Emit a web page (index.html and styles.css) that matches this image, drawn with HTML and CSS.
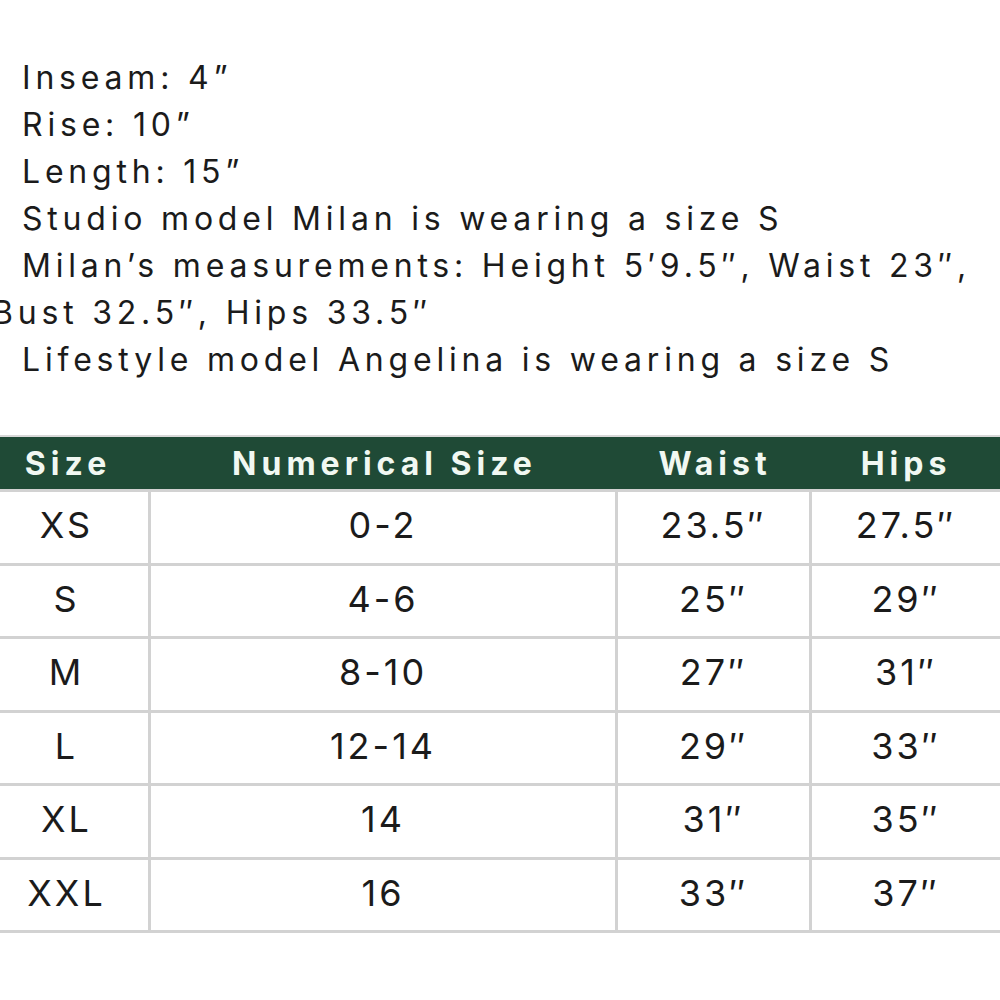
FILE: index.html
```html
<!DOCTYPE html>
<html>
<head>
<meta charset="utf-8">
<link rel="stylesheet" href="styles.css">
</head>
<body>
<div class="page">
  <div class="details">
    <div class="line">Inseam: 4”</div>
    <div class="line">Rise: 10”</div>
    <div class="line">Length: 15”</div>
    <div class="line">Studio model Milan is wearing a size S</div>
    <div class="line">Milan’s measurements: Height 5′9.5″, Waist 23″,</div>
    <div class="line wrap">Bust 32.5″, Hips 33.5″</div>
    <div class="line">Lifestyle model Angelina is wearing a size S</div>
  </div>

  <div class="chart">
    <div class="row head">
      <div class="cell">Size</div>
      <div class="cell">Numerical Size</div>
      <div class="cell">Waist</div>
      <div class="cell">Hips</div>
    </div>
    <div class="row">
      <div class="cell">XS</div>
      <div class="cell">0-2</div>
      <div class="cell">23.5″</div>
      <div class="cell">27.5″</div>
    </div>
    <div class="row">
      <div class="cell">S</div>
      <div class="cell">4-6</div>
      <div class="cell">25″</div>
      <div class="cell">29″</div>
    </div>
    <div class="row">
      <div class="cell">M</div>
      <div class="cell">8-10</div>
      <div class="cell">27″</div>
      <div class="cell">31″</div>
    </div>
    <div class="row">
      <div class="cell">L</div>
      <div class="cell">12-14</div>
      <div class="cell">29″</div>
      <div class="cell">33″</div>
    </div>
    <div class="row">
      <div class="cell">XL</div>
      <div class="cell">14</div>
      <div class="cell">31″</div>
      <div class="cell">35″</div>
    </div>
    <div class="row">
      <div class="cell">XXL</div>
      <div class="cell">16</div>
      <div class="cell">33″</div>
      <div class="cell">37″</div>
    </div>
  </div>
</div>
</body>
</html>
```

FILE: styles.css
```css
html, body {
  margin: 0;
  padding: 0;
  background: #ffffff;
}
body {
  width: 1000px;
  height: 1000px;
  overflow: hidden;
  font-family: "Inter", "Liberation Sans", sans-serif;
  color: #1b1b1b;
}
.page {
  margin-left: -15px;
  width: 1015px;
}
.details {
  padding-top: 54px;
  font-size: 32px;
  line-height: 47px;
  letter-spacing: 4.8px;
  white-space: nowrap;
}
.line {
  padding-left: 37px;
}
.line.wrap {
  padding-left: 7px;
}
.chart {
  margin-top: 52px;
  width: 1015px;
}
.row {
  display: grid;
  grid-template-columns: 166px 467px 194px 188px;
  height: 70.5px;
  border-bottom: 3px solid #d2d2d2;
}
.row .cell {
  display: flex;
  align-items: center;
  justify-content: center;
  font-size: 36px;
  letter-spacing: 3px;
  border-right: 3px solid #d2d2d2;
  padding-bottom: 4px;
}
.row .cell:last-child {
  border-right: none;
}
.row.head {
  background: #1f4a36;
  height: 52px;
  border-top: 2px solid #d8d8d8;
  border-bottom: 3px solid #d2d2d2;
}
.row.head .cell {
  color: #f1f8f2;
  font-weight: 700;
  font-size: 32px;
  letter-spacing: 5px;
  border-right: none;
  padding-bottom: 0;
}
```
